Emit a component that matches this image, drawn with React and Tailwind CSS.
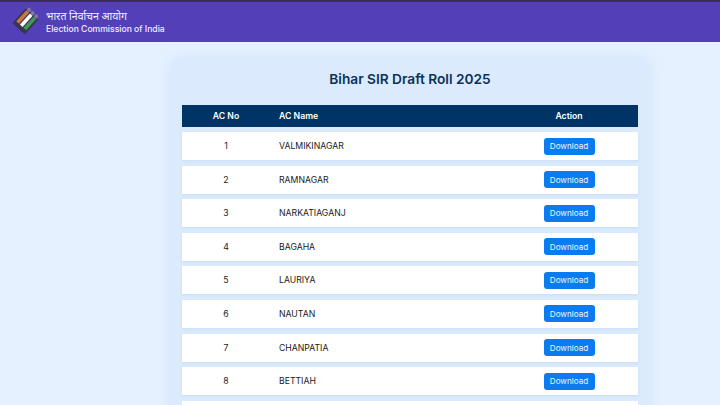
const rows = [
  [1, 'VALMIKINAGAR'],
  [2, 'RAMNAGAR'],
  [3, 'NARKATIAGANJ'],
  [4, 'BAGAHA'],
  [5, 'LAURIYA'],
  [6, 'NAUTAN'],
  [7, 'CHANPATIA'],
  [8, 'BETTIAH'],
];

function Logo() {
  return (
    <svg width="28" height="30" viewBox="0 0 28 30" className="shrink-0">
      <g transform="rotate(42 14 15)">
        <rect x="4.5" y="5" width="17" height="20" rx="1.5" fill="#3b3550" />
        <rect x="6.4" y="6" width="3.6" height="15" fill="#c9793f" />
        <rect x="11.2" y="6" width="3.6" height="15" fill="#ffffff" />
        <rect x="16" y="6" width="3.6" height="15" fill="#3f9a55" />
        <circle cx="8.2" cy="4" r="2" fill="#7f7a9c" />
        <circle cx="13" cy="4" r="2" fill="#7f7a9c" />
        <circle cx="17.8" cy="4" r="2" fill="#7f7a9c" />
      </g>
    </svg>
  );
}

export default function App() {
  return (
    <div className="h-[405px] overflow-hidden bg-[#e6f1ff] font-['Inter',sans-serif]">
      <header className="h-[42px] flex items-center gap-[6px] pl-[12px] bg-[#5340b8] border-t-2 border-[#3b2f4f]">
        <Logo />
        <div className="text-[#f1effa] leading-none">
          <div className="text-[10.5px] leading-[14px] font-['Noto_Sans','Noto_Sans_Devanagari',sans-serif]">भारत निर्वाचन आयोग</div>
          <div className="text-[8.6px] leading-[13px] font-medium">Election Commission of India</div>
        </div>
      </header>

      <main className="w-[480px] ml-[170px] mt-[16px] px-[12px] pt-[11px] rounded-[12px] bg-[#dbebfd] shadow-[0_0_12px_rgba(190,215,250,0.5)]">
        <h1 className="text-[13.7px] leading-[20px] font-semibold text-center text-[#0b3358] mb-[16px]">Bihar SIR Draft Roll 2025</h1>
        <div className="text-[8.7px]">
          <div className="grid grid-cols-[88px_230px_1fr] items-center h-[21.5px] pt-px mb-[5.5px] bg-[#003366] text-white font-semibold">
            <div className="text-center">AC No</div>
            <div className="pl-[9px]">AC Name</div>
            <div className="text-center">Action</div>
          </div>
          <div className="flex flex-col gap-[5.6px]">
            {rows.map(([no, name]) => (
              <div key={no} className="grid grid-cols-[88px_230px_1fr] items-center h-[28px] bg-white text-[#1a1a1a] shadow-[0_1px_2px_rgba(180,205,240,0.5)]">
                <div className="text-center pt-px">{no}</div>
                <div className="pl-[9px] pt-px">{name}</div>
                <div className="flex justify-center">
                  <button className="w-[51px] h-[17px] rounded-[3px] bg-[#0b7cf0] text-[#eef6ff] text-[8.1px] leading-none">Download</button>
                </div>
              </div>
            ))}
            {/* next row only just shows at the bottom edge */}
            <div className="h-[28px] bg-white" />
          </div>
        </div>
      </main>
    </div>
  );
}
